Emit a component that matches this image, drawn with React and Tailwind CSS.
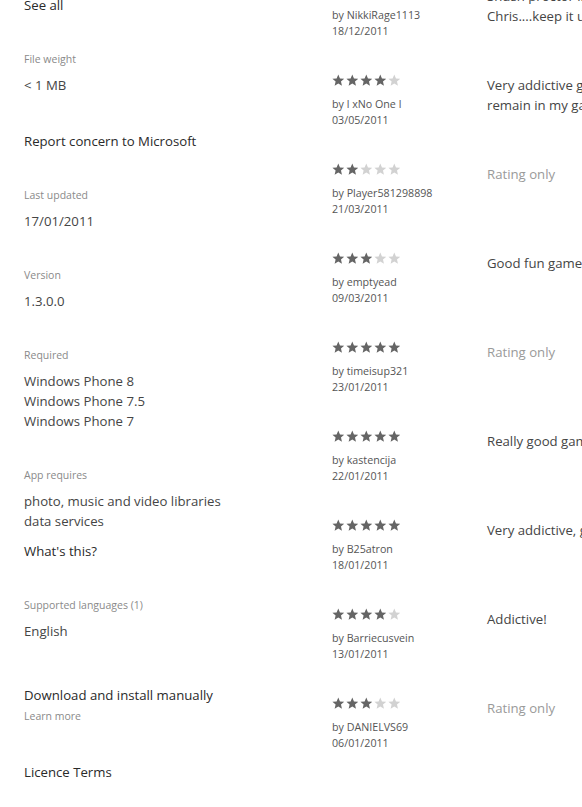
import React from "react";

const reviews = [
	{ stars: 5, by: "NikkiRage1113", date: "18/12/2011", lines: ["Shush proctor is great fun, well done", "Chris....keep it up and add more levels"] },
	{ stars: 4, by: "l xNo One l", date: "03/05/2011", lines: ["Very addictive game, this will definitely", "remain in my games list for a long time"] },
	{ stars: 2, by: "Player581298898", date: "21/03/2011", ratingOnly: true },
	{ stars: 3, by: "emptyead", date: "09/03/2011", lines: ["Good fun game for killing time"] },
	{ stars: 5, by: "timeisup321", date: "23/01/2011", ratingOnly: true },
	{ stars: 5, by: "kastencija", date: "22/01/2011", lines: ["Really good game, love it"] },
	{ stars: 5, by: "B25atron", date: "18/01/2011", lines: ["Very addictive, great for passing time"] },
	{ stars: 4, by: "Barriecusvein", date: "13/01/2011", lines: ["Addictive!"] },
	{ stars: 3, by: "DANIELVS69", date: "06/01/2011", ratingOnly: true },
];

const Star = ({ filled }) => (
	<svg width="12.6" height="12.6" viewBox="0 0 24 24" className={filled ? "fill-[#656565]" : "fill-[#d2d2d2]"}>
		<path d="M12 1l3.2 7.4 8 .7-6.1 5.3 1.9 7.9L12 18.1l-7 4.2 1.9-7.9L.8 9.1l8-.7z" />
	</svg>
);

const Label = ({ children, className = "" }) => (
	<p className={`text-[10.5px] leading-[16px] text-[#8a8a8a] ${className}`}>{children}</p>
);

const Value = ({ children, className = "" }) => (
	<p className={`text-[13.2px] leading-[20px] text-[#454545] ${className}`}>{children}</p>
);

const Link = ({ children, className = "" }) => (
	<p className={`text-[13.2px] leading-[20px] text-[#2a2a2a] ${className}`}>{children}</p>
);

const Review = ({ review }) => (
	<div className="flex h-[89px]">
		<div className="w-[155px] shrink-0">
			<div className="mt-[3px] flex h-[14px] items-center gap-[1.3px]">
				{[0, 1, 2, 3, 4].map((i) => (
					<Star key={i} filled={i < review.stars} />
				))}
			</div>
			<p className="mt-[9px] text-[10.7px] leading-[16px] text-[#555]">by {review.by}</p>
			<p className="text-[10.7px] leading-[16px] text-[#555]">{review.date}</p>
		</div>
		<div className="mt-[5px] whitespace-nowrap">
			{review.ratingOnly ? (
				<p className="text-[13.2px] leading-[20px] text-[#9a9a9a]">Rating only</p>
			) : (
				review.lines.map((line) => (
					<p key={line} className="text-[13.2px] leading-[20px] text-[#454545]">
						{line}
					</p>
				))
			)}
		</div>
	</div>
);

export default function App() {
	return (
		<div
			className="h-[807px] w-[582px] overflow-hidden bg-white"
			style={{ fontFamily: '"Open Sans", "Noto Sans", sans-serif' }}
		>
			<div className="-mt-[19px] flex pl-[24px]">
				{/* details column */}
				<div className="w-[308px] shrink-0 pt-[14px]">
					<Link>See all</Link>

					<Label className="mt-[36px]">File weight</Label>
					<Value className="mt-[8px]">&lt; 1 MB</Value>

					<Link className="mt-[36px]">Report concern to Microsoft</Link>

					<Label className="mt-[36px]">Last updated</Label>
					<Value className="mt-[8px]">17/01/2011</Value>

					<Label className="mt-[36px]">Version</Label>
					<Value className="mt-[8px]">1.3.0.0</Value>

					<Label className="mt-[36px]">Required</Label>
					<div className="mt-[8px]">
						<Value>Windows Phone 8</Value>
						<Value>Windows Phone 7.5</Value>
						<Value>Windows Phone 7</Value>
					</div>

					<Label className="mt-[36px]">App requires</Label>
					<div className="mt-[8px]">
						<Value>photo, music and video libraries</Value>
						<Value>data services</Value>
					</div>
					<Link className="mt-[10px]">What's this?</Link>

					<Label className="mt-[36px]">Supported languages (1)</Label>
					<Value className="mt-[8px]">English</Value>

					<Link className="mt-[44px]">Download and install manually</Link>
					<Label className="mt-[3px]">Learn more</Label>

					<Link className="mt-[38px]">Licence Terms</Link>
				</div>

				{/* reviews column */}
				<div className="flex-1">
					{reviews.map((r) => (
						<Review key={r.by} review={r} />
					))}
				</div>
			</div>
		</div>
	);
}
